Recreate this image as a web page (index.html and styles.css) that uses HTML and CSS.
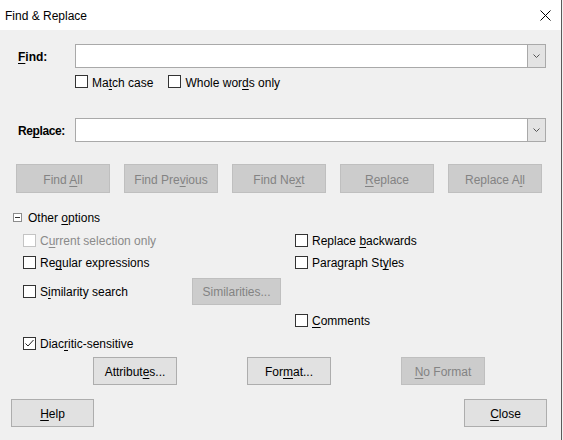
FILE: index.html
```html
<!DOCTYPE html>
<html>
<head>
<meta charset="utf-8">
<title>Find &amp; Replace</title>
<link rel="stylesheet" href="styles.css">
</head>
<body>
<div class="window">
  <div class="titlebar">
    <span class="title txt">Find &amp; Replace</span>
    <svg class="close-x" width="11" height="11" viewBox="0 0 11 11"><path d="M0.5 0.5 L10.5 10.5 M10.5 0.5 L0.5 10.5" stroke="#000" stroke-width="1" fill="none"/></svg>
  </div>
  <div class="content">
    <div class="field-row">
      <span class="field-label txt"><u>F</u>ind:</span>
      <div class="combo">
        <div class="combo-input"></div>
        <div class="combo-btn"><svg width="7" height="4" viewBox="0 0 7 4"><path d="M0.5 0.5 L3.5 3.5 L6.5 0.5" stroke="#555" stroke-width="1" fill="none"/></svg></div>
      </div>
    </div>
    <div class="find-opts">
      <label class="check"><span class="box"></span><span class="txt">Ma<u>t</u>ch case</span></label>
      <label class="check"><span class="box"></span><span class="txt">Whole wor<u>d</u>s only</span></label>
    </div>
    <div class="field-row replace-row">
      <span class="field-label replace-label txt">Re<u>p</u>lace:</span>
      <div class="combo">
        <div class="combo-input"></div>
        <div class="combo-btn"><svg width="7" height="4" viewBox="0 0 7 4"><path d="M0.5 0.5 L3.5 3.5 L6.5 0.5" stroke="#555" stroke-width="1" fill="none"/></svg></div>
      </div>
    </div>
    <div class="action-row">
      <button class="btn disabled"><span class="txt">Find <u>A</u>ll</span></button>
      <button class="btn disabled"><span class="txt">Find Pre<u>v</u>ious</span></button>
      <button class="btn disabled"><span class="txt">Find Ne<u>x</u>t</span></button>
      <button class="btn disabled"><span class="txt"><u>R</u>eplace</span></button>
      <button class="btn disabled"><span class="txt">Replace A<u>l</u>l</span></button>
    </div>
    <div class="other-head">
      <span class="expander"><span class="minus"></span></span>
      <span class="txt">Other <u>o</u>ptions</span>
    </div>
    <div class="options-grid">
      <label class="check muted c1 r1"><span class="box"></span><span class="txt">C<u>u</u>rrent selection only</span></label>
      <label class="check c3 r1"><span class="box"></span><span class="txt">Replace <u>b</u>ackwards</span></label>
      <label class="check c1 r2"><span class="box"></span><span class="txt">Re<u>g</u>ular expressions</span></label>
      <label class="check c3 r2"><span class="box"></span><span class="txt">Paragraph St<u>y</u>les</span></label>
      <label class="check c1 r3"><span class="box"></span><span class="txt">S<u>i</u>milarity search</span></label>
      <div class="c2 r3 cell-btn"><button class="btn disabled sim-btn"><span class="txt">Similarities...</span></button></div>
      <label class="check c3 r4"><span class="box"></span><span class="txt"><u>C</u>omments</span></label>
      <label class="check c1 r5"><span class="box checked"><svg width="11" height="11" viewBox="0 0 11 11"><path d="M1.5 5.5 L4 8 L9.5 2" stroke="#222" stroke-width="1" fill="none"/></svg></span><span class="txt">Diac<u>r</u>itic-sensitive</span></label>
    </div>
    <div class="format-row">
      <button class="btn fmt-btn"><span class="txt">Attribut<u>e</u>s...</span></button>
      <button class="btn fmt-btn"><span class="txt">For<u>m</u>at...</span></button>
      <button class="btn fmt-btn disabled"><span class="txt"><u>N</u>o Format</span></button>
    </div>
    <div class="footer-row">
      <button class="btn foot-btn"><span class="txt"><u>H</u>elp</span></button>
      <button class="btn foot-btn"><span class="txt"><u>C</u>lose</span></button>
    </div>
  </div>
</div>
</body>
</html>
```
FILE: styles.css
```css
html, body {
  margin: 0;
  padding: 0;
  background: #f0f0f0;
}
body {
  font-family: "Liberation Sans", Arial, sans-serif;
  font-size: 12px;
  color: #000;
}
u {
  text-decoration: underline;
  text-underline-offset: 2px;
}
.txt {
  padding-top: 2px;
}
.window {
  width: 561px;
  height: 440px;
  border-right: 1px solid #5a5a5a;
  background: #f0f0f0;
  box-sizing: content-box;
  overflow: hidden;
}
.titlebar {
  height: 30px;
  background: #fff;
  display: flex;
  align-items: center;
  justify-content: space-between;
  padding: 0 10px 0 5px;
}
.title {
  font-size: 12px;
  color: #000;
}
.close-x {
  display: block;
}
.content {
  padding: 14px 15px 0 18px;
}
.field-row {
  display: flex;
  align-items: center;
  height: 24px;
}
.field-label {
  width: 57px;
  flex: none;
  font-weight: bold;
}
.replace-label {
  letter-spacing: -0.4px;
}
.combo {
  flex: 1;
  display: flex;
  height: 24px;
  box-sizing: border-box;
  border: 1px solid #a9a9a9;
  background: #fff;
}
.combo-input {
  flex: 1;
}
.combo-btn {
  width: 17px;
  background: #e3e3e3;
  border-left: 1px solid #a9a9a9;
  display: flex;
  align-items: center;
  justify-content: center;
}
.combo-btn svg {
  display: block;
}
.find-opts {
  margin-top: 7px;
  margin-left: 57px;
  height: 13px;
  display: flex;
  align-items: center;
  gap: 15px;
}
.check {
  display: flex;
  align-items: center;
  gap: 4px;
  white-space: nowrap;
}
.box {
  width: 13px;
  height: 13px;
  box-sizing: border-box;
  border: 1px solid #333;
  background: #fff;
  flex: none;
  display: flex;
  align-items: center;
  justify-content: center;
}
.box svg {
  display: block;
}
.muted {
  color: #8a8a8a;
}
.muted .box {
  border-color: #c4c4c4;
}
.replace-row {
  margin-top: 30px;
}
.action-row {
  margin-top: 22px;
  margin-left: -2px;
  display: flex;
  gap: 14px;
}
.btn {
  font-family: "Liberation Sans", Arial, sans-serif;
  font-size: 12px;
  color: #000;
  background: #e1e1e1;
  border: 1px solid #adadad;
  padding: 0;
  margin: 0;
  box-sizing: border-box;
  display: flex;
  align-items: center;
  justify-content: center;
  white-space: nowrap;
}
.btn.disabled {
  background: #cccccc;
  border-color: #bfbfbf;
  color: #838383;
}
.action-row .btn {
  width: 94px;
  height: 29px;
}
.other-head {
  margin-top: 13px;
  margin-left: -5px;
  height: 22px;
  display: flex;
  align-items: center;
  gap: 6px;
}
.expander {
  width: 9px;
  height: 9px;
  box-sizing: border-box;
  border: 1px solid #8c8c8c;
  background: #fff;
  display: flex;
  align-items: center;
  justify-content: center;
}
.minus {
  width: 5px;
  height: 1px;
  background: #333;
}
.options-grid {
  margin-left: 5px;
  display: grid;
  grid-template-columns: 169px 103px 1fr;
  grid-template-rows: 24px 20px 38px 20px 26px;
  align-items: center;
}
.c1 { grid-column: 1; }
.c2 { grid-column: 2; }
.c3 { grid-column: 3; }
.r1 { grid-row: 1; }
.r2 { grid-row: 2; }
.r3 { grid-row: 3; }
.r4 { grid-row: 4; }
.r5 { grid-row: 5; }
.cell-btn {
  display: flex;
  align-items: center;
}
.sim-btn {
  width: 89px;
  height: 27px;
}
.format-row {
  margin-top: 1px;
  padding-left: 75px;
  display: flex;
  gap: 70px;
}
.fmt-btn {
  width: 84px;
  height: 28px;
}
.footer-row {
  margin-top: 14px;
  margin-left: -7px;
  margin-right: -1px;
  display: flex;
  justify-content: space-between;
}
.foot-btn {
  width: 83px;
  height: 28px;
}
```
